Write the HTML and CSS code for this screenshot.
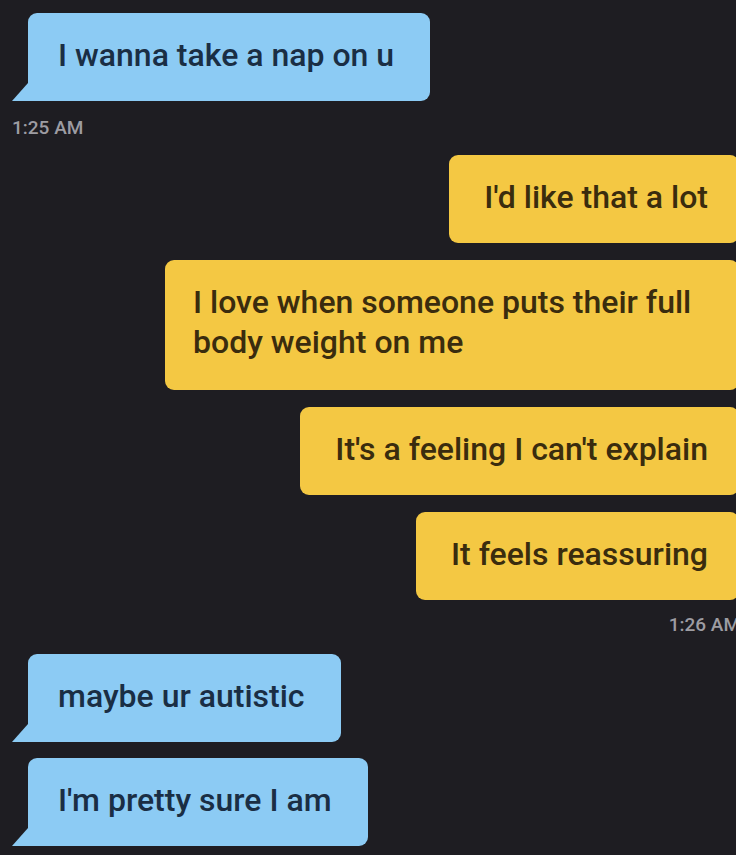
FILE: index.html
```html
<!DOCTYPE html>
<html lang="en">
<head>
<meta charset="utf-8">
<title>Chat</title>
<link rel="stylesheet" href="styles.css">
</head>
<body>
<main class="chat">
  <div class="bubble in">I wanna take a nap on u</div>
  <div class="time time-in">1:25 AM</div>
  <div class="bubble out">I'd like that a lot</div>
  <div class="bubble out wide">I love when someone puts their full body weight on me</div>
  <div class="bubble out">It's a feeling I can't explain</div>
  <div class="bubble out">It feels reassuring</div>
  <div class="time time-out">1:26 AM</div>
  <div class="bubble in">maybe ur autistic</div>
  <div class="bubble in">I'm pretty sure I am</div>
</main>
</body>
</html>
```
FILE: styles.css
```css
html, body {
  margin: 0;
  padding: 0;
  background: #1e1d22;
  overflow: hidden;
}
.chat {
  display: flex;
  flex-direction: column;
  gap: 16px;
  padding: 13px 0 0 0;
  font-family: Roboto, "Noto Sans", sans-serif;
}
.bubble {
  position: relative;
  box-sizing: border-box;
  font-size: 32px;
  font-weight: 500;
  line-height: 40px;
  padding: 22px 36px 26px 30px;
  border-radius: 9px;
}
.in {
  align-self: flex-start;
  margin-left: 28px;
  background: #8ccbf4;
  color: #1a2e44;
  border-bottom-left-radius: 0;
}
.in::before {
  content: "";
  position: absolute;
  left: -16px;
  bottom: 0;
  width: 16px;
  height: 18px;
  background: #8ccbf4;
  clip-path: polygon(100% 0, 100% 100%, 0 100%);
}
.out {
  align-self: flex-end;
  margin-right: -3px;
  background: #f4c843;
  color: #3a2c0e;
  padding-left: 35px;
  padding-right: 31px;
}
.wide {
  max-width: 574px;
  padding-left: 28px;
  padding-bottom: 28px;
}
.out + .out {
  margin-top: 1px;
}
.time {
  font-size: 19px;
  font-weight: 500;
  line-height: 22px;
  color: #9d9ca2;
}
.time-in {
  align-self: flex-start;
  margin-left: 12px;
}
.time-out {
  align-self: flex-end;
  margin-right: -4px;
  margin-top: -2px;
}
.time-out + .in {
  margin-top: 2px;
}
```
